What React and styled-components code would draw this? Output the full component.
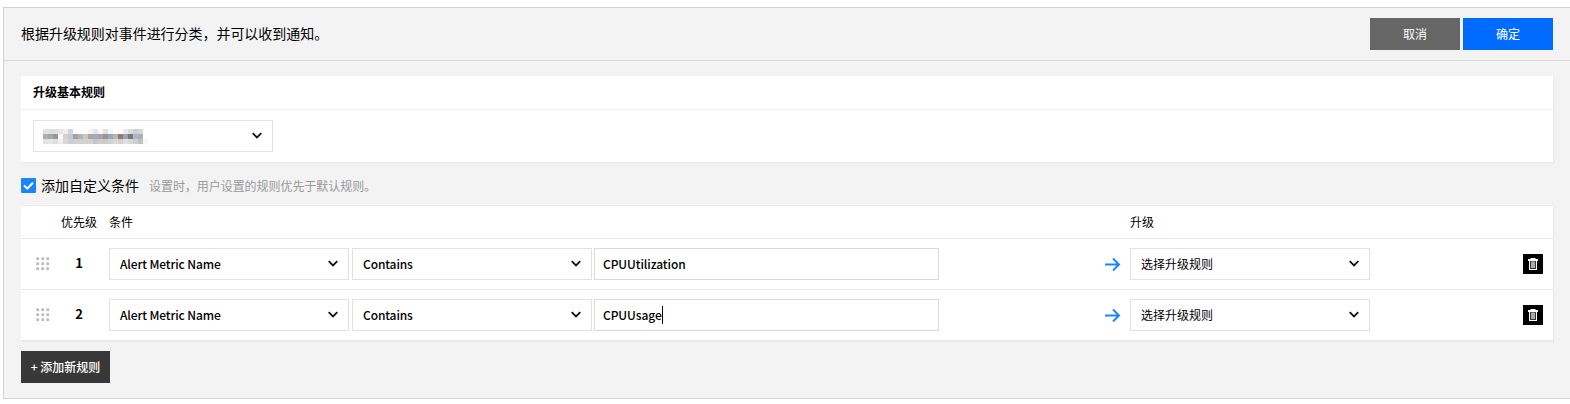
import React from "react";
import styled, { createGlobalStyle } from "styled-components";

const GlobalStyle = createGlobalStyle`
  *, *::before, *::after { box-sizing: border-box; }
  body {
    margin: 0;
    background: #fff;
    color: #000;
    font: 12px/18px "Noto Sans CJK SC", sans-serif;
  }
  button, input { font: inherit; border-radius: 0; }
`;

const Panel = styled.section`
  margin: 7px 0 0 3px;
  height: 392px;
  background: #f3f3f3;
  border: 1px solid #d2d2d2;
  border-right: 0;
`;

const Header = styled.header`
  display: flex;
  align-items: center;
  justify-content: space-between;
  height: 53px;
  padding: 0 17px;
  border-bottom: 1px solid #d9d9d9;
`;

const Title = styled.h1`
  margin: 0;
  padding-bottom: 2px;
  font-size: 14px;
  line-height: 20px;
  font-weight: 400;
  letter-spacing: -0.04px;
`;

const Actions = styled.div`
  display: flex;
  gap: 3px;
  margin-top: -1px;
`;

const Button = styled.button`
  width: ${(p) => p.$width || 90}px;
  height: 32px;
  padding: 0;
  border: 0;
  color: #fff;
  font-weight: ${(p) => p.$weight || 400};
  background: ${(p) => p.$color};
`;

const Body = styled.div`
  padding: 15px 17px 0;
`;

const Card = styled.div`
  background: #fff;
  box-shadow: 1px 1px 2px rgba(0, 0, 0, 0.05);
`;

const CardTitle = styled.h2`
  margin: 0;
  height: 34px;
  padding: 0 12px;
  font-size: 12px;
  line-height: 32px;
  font-weight: 700;
  border-bottom: 1px solid #f1f1f1;
`;

const CardContent = styled.div`
  padding: 10px 12px;
`;

const SelectBox = styled.div`
  display: flex;
  align-items: center;
  justify-content: space-between;
  flex: none;
  width: 240px;
  height: 32px;
  padding: 0 10px;
  border: 1px solid #e2e2e2;
  background: #fff;
  font-weight: ${(p) => (p.$latin ? 500 : 400)};
  letter-spacing: ${(p) => (p.$latin ? "-0.12px" : "normal")};
`;

const Mosaic = styled.span`
  display: grid;
  grid-template-columns: repeat(21, 5px);
  grid-auto-rows: 5px;
  margin-left: -1px;
`;

const Cell = styled.i`
  background: ${(p) => p.$color};
`;

const CheckRow = styled.label`
  display: flex;
  align-items: center;
  height: 43px;
  padding-top: 4px;
  font-size: 14px;
`;

const CheckText = styled.span`
  padding-bottom: 2px;
`;

const CheckMark = styled.svg`
  width: 15px;
  height: 15px;
  margin-right: 5px;
`;

const Hint = styled.span`
  margin-left: 10px;
  font-size: 12px;
  letter-spacing: -0.05px;
  color: #999;
`;

const Table = styled(Card)`
  border-top: 1px solid #ebebeb;
  box-shadow: 1px 2px 1px rgba(0, 0, 0, 0.04);
`;

const TableHead = styled.div`
  display: grid;
  grid-template-columns: 40px 48px 1021px 1fr;
  align-items: center;
  height: 33px;
  border-bottom: 1px solid #e8e8e8;
`;

const Row = styled.div`
  display: grid;
  grid-template-columns: 40px 48px 996px 25px 1fr 20px;
  align-items: center;
  height: 50px;
  padding-right: 10px;
  & + & {
    height: 51px;
    border-top: 1px solid #e8e8e8;
  }
`;

const Handle = styled.svg`
  width: 14px;
  height: 14px;
  margin-left: 15px;
`;

const Priority = styled.span`
  width: 36px;
  padding-bottom: 3px;
  text-align: center;
  font-size: 13px;
  font-weight: 700;
`;

const Conditions = styled.div`
  display: flex;
  gap: 3px;
`;

const ValueField = styled.div`
  display: flex;
  align-items: center;
  width: 345px;
  height: 32px;
  margin-left: -1px;
  padding: 0 8px;
  border: 1px solid #dadada;
  font-weight: 500;
  letter-spacing: -0.08px;
`;

const Caret = styled.i`
  width: 1px;
  height: 18px;
  background: #000;
`;

const DeleteButton = styled.button`
  display: block;
  width: 20px;
  height: 20px;
  padding: 0;
  border: 0;
  background: #000;
`;

const Icon = styled.svg`
  display: block;
  flex: none;
`;

const AddButton = styled(Button)`
  display: block;
  margin-top: 11px;
`;

const Chevron = () => (
  <Icon width="10" height="8" viewBox="0 0 10 8" fill="none" stroke="#111" strokeWidth="1.8">
    <path d="M.7 1.2 5 5.5l4.3-4.3" />
  </Icon>
);

const Arrow = () => (
  <Icon width="16" height="14" viewBox="0 0 16 14" fill="none" stroke="#1a85ff" strokeWidth="2">
    <path d="M0 7.5h14M8 1.5l6 6-6 6" />
  </Icon>
);

const Trash = () => (
  <Icon width="20" height="20" viewBox="0 0 20 20">
    <path d="M7.5 4h5v1H15v2H5V5h2.5z" fill="#fff" />
    <path d="M6 7h8v9H6z" fill="#fff" />
    <path d="M7 7h6v8H7z" fill="#333" />
    <path d="M8 7.5h4V14H8z" fill="#aaa" />
  </Icon>
);

const Grip = () => (
  <Handle viewBox="0 0 14 14" fill="#bdbdbd">
    {[0, 5, 10].map((y) => [0, 5, 10].map((x) => <rect key={`${x}-${y}`} x={x + 0.3} y={y + 0.3} width="2.8" height="2.8" />))}
  </Handle>
);

const maskedCells = [
  "#e3e3e3 #dfdfdf #dedede #e5e5ee #f3eeee #ced6de #fff #fff #fff #f9f3ea #dce5f0 #f7f7f7 #e6dfdf #eff7fa #fff #fff #e9e9e9 #dcdcdc #cbd1d8 #d7d7d7 #fff",
  "#aeb0ae #a5a5ad #9b9799 #fafafa #e3cbc1 #b5cddd #a69fa5 #b1b6b3 #c8c8c5 #aca699 #a4a9bb #a6a3a4 #9e9190 #98aab0 #b8b8b0 #967780 #98a4ad #7e7780 #adb6c4 #b0b0b0 #fff",
  "#e3e3e3 #e3e6e6 #dddfe2 #f0edf4 #dfd5d0 #c4d1d8 #d8cfcf #cfd0d2 #d1d1d0 #d1d2ca #c2c5cd #d0cbc5 #d3c6c4 #cdd2d8 #d8dcd7 #dccbd0 #dbe3df #dad6dc #c8d0d6 #c4c1b7 #f2f9fd",
].join(" ").split(" ");

const rules = [
  { priority: 1, value: "CPUUtilization" },
  { priority: 2, value: "CPUUsage", focused: true },
];

const Select = ({ children, latin }) => (
  <SelectBox $latin={latin}>
    <span>{children}</span>
    <Chevron />
  </SelectBox>
);

export default function App() {
  return (
    <>
      <GlobalStyle />
      <Panel>
        <Header>
          <Title>根据升级规则对事件进行分类，并可以收到通知。</Title>
          <Actions>
            <Button $color="#666">取消</Button>
            <Button $color="#006cff">确定</Button>
          </Actions>
        </Header>
        <Body>
          <Card>
            <CardTitle>升级基本规则</CardTitle>
            <CardContent>
              <SelectBox>
                <Mosaic>{maskedCells.map((c, i) => <Cell key={i} $color={c} />)}</Mosaic>
                <Chevron />
              </SelectBox>
            </CardContent>
          </Card>
          <CheckRow>
            <CheckMark viewBox="0 0 15 15">
              <rect width="15" height="15" rx="1" fill="#1a85ff" />
              <path d="M3 7.5 6.3 10.5 12 4.7" fill="none" stroke="#fff" strokeWidth="2" />
            </CheckMark>
            <CheckText>添加自定义条件</CheckText>
            <Hint>设置时，用户设置的规则优先于默认规则。</Hint>
          </CheckRow>
          <Table>
            <TableHead>
              <span />
              <span>优先级</span>
              <span>条件</span>
              <span>升级</span>
            </TableHead>
            {rules.map((rule) => (
              <Row key={rule.priority}>
                <Grip />
                <Priority>{rule.priority}</Priority>
                <Conditions>
                  <Select latin>Alert Metric Name</Select>
                  <Select latin>Contains</Select>
                  <ValueField>
                    {rule.value}
                    {rule.focused && <Caret />}
                  </ValueField>
                </Conditions>
                <Arrow />
                <Select>选择升级规则</Select>
                <DeleteButton aria-label="删除"><Trash /></DeleteButton>
              </Row>
            ))}
          </Table>
          <AddButton $color="#383838" $width={89} $weight={500}>+ 添加新规则</AddButton>
        </Body>
      </Panel>
    </>
  );
}
